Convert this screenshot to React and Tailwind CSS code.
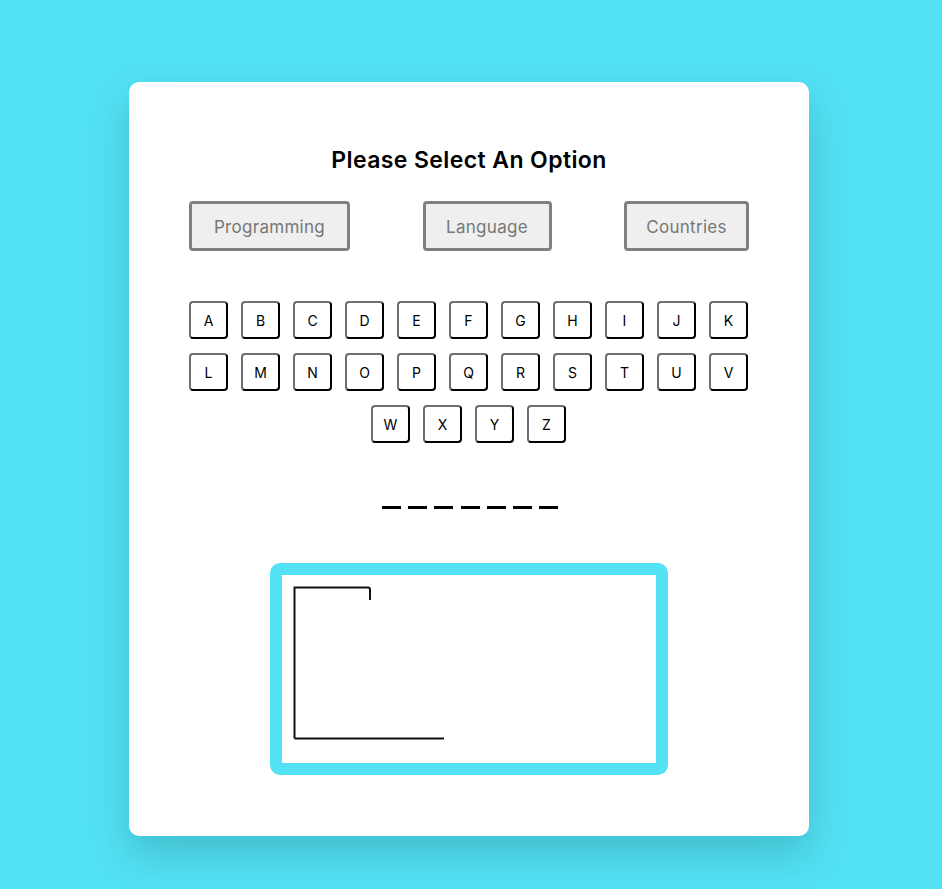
import React from "react";

const rows = [
  ["A", "B", "C", "D", "E", "F", "G", "H", "I", "J", "K"],
  ["L", "M", "N", "O", "P", "Q", "R", "S", "T", "U", "V"],
  ["W", "X", "Y", "Z"],
];

export default function App() {
  return (
    <div
      className="min-h-[889px] w-full bg-[#53e2f4] pt-[82px] pb-[54px]"
      style={{ fontFamily: "Inter, 'Noto Sans', sans-serif" }}
    >
      <div className="ml-[129px] w-[680px] rounded-[10px] bg-white px-[60px] pt-[62px] pb-[61px] shadow-[0_18px_40px_rgba(0,60,70,0.22)]">
        <h1 className="h-[33px] text-center text-[23px] font-semibold leading-[33px] tracking-[0.4px] text-black">
          Please Select An Option
        </h1>
        <div className="mt-[24px] flex justify-between">
          {[
            ["Programming", "w-[161px]"],
            ["Language", "w-[129px]"],
            ["Countries", "w-[125px]"],
          ].map(([t, w]) => (
            <button
              key={t}
              className={`${w} h-[50px] rounded-[4px] border-[3px] border-[#808080] bg-[#efefef] pt-[3px] text-[17px] tracking-[0.3px] text-[#777]`}
            >
              {t}
            </button>
          ))}
        </div>
        <div className="mt-[50px] flex flex-col items-center gap-[14px] pr-[1px]">
          {rows.map((r, i) => (
            <div key={i} className="flex gap-[13px]">
              {r.map((l) => (
                <button
                  key={l}
                  className="flex h-[38px] w-[39px] items-center justify-center rounded-[4px] border-2 border-t-[#6e6e6e] border-l-[#6e6e6e] border-r-black border-b-black bg-white text-[14px] text-black"
                >
                  {l}
                </button>
              ))}
            </div>
          ))}
        </div>
        <div className="mt-[63px] flex justify-center gap-[7.3px] pl-[2px]">
          {Array.from({ length: 7 }).map((_, i) => (
            <div key={i} className="h-[3px] w-[19px] bg-black" />
          ))}
        </div>
        <div className="mt-[54px] flex justify-center">
          <div className="h-[212px] w-[398px] rounded-[10px] border-[12px] border-[#53e2f4] bg-white">
            <svg width="374" height="188" className="block">
              <path
                d="M12.5 163.5 V12.5 H86 Q88 12.5 88 14.5 V25"
                fill="none"
                stroke="#111"
                strokeWidth="2"
              />
              <path d="M12.5 163.5 H162" fill="none" stroke="#111" strokeWidth="2" />
            </svg>
          </div>
        </div>
      </div>
    </div>
  );
}
